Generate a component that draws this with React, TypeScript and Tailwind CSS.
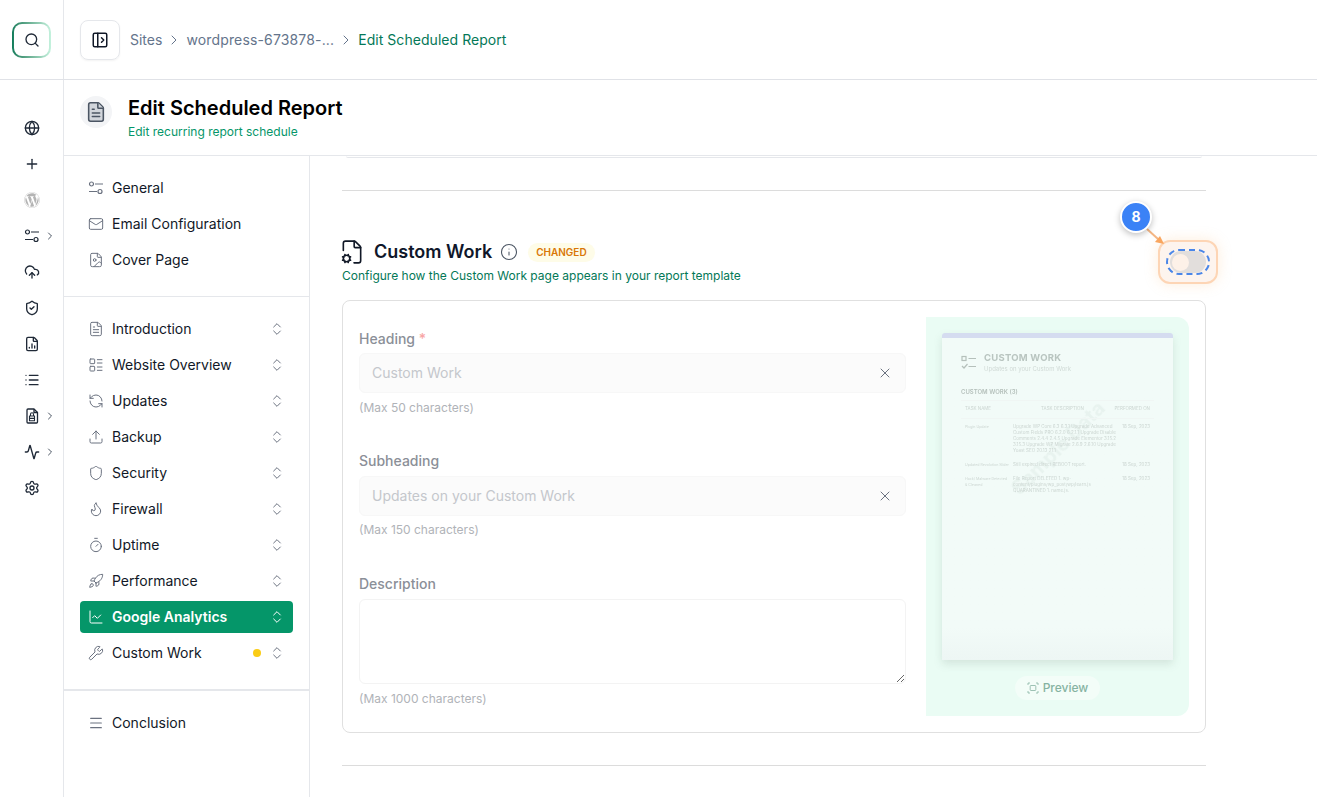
import { Activity, ChartLine, ChevronRight, ChevronsUpDown, CloudUpload, FileChartColumn, FileCog, FileImage, FileText, Flame, Globe, Info, LayoutList, Mail, Menu, PanelLeftOpen, Plus, RefreshCcw, Rocket, Search, Settings, Shield, ShieldCheck, Timer, Upload, Wrench, List, X } from 'lucide-react';
import { FaWordpress } from 'react-icons/fa';

function Sliders({ className }: { className?: string }) {
  return (
    <svg viewBox="0 0 16 16" fill="none" stroke="currentColor" strokeWidth="1.2" className={className}>
      <circle cx="3.5" cy="4" r="2" />
      <path d="M7 4h8M1 11.5h8" />
      <circle cx="12" cy="11.5" r="2" />
    </svg>
  );
}

function FileBadge({ className }: { className?: string }) {
  return (
    <svg viewBox="0 0 16 16" fill="none" stroke="currentColor" strokeWidth="1.3" strokeLinejoin="round" className={className}>
      <path d="M4 1h6l3.5 3.5V14a1 1 0 0 1-1 1H4a1 1 0 0 1-1-1V2a1 1 0 0 1 1-1z" />
      <path d="M10 1v3.5h3.5" />
      <rect x="5.5" y="8" width="5" height="4.8" strokeWidth="1.1" />
      <path d="M6.5 8V6.3a1.5 1.5 0 0 1 3 0V8M5.5 10.4h5" strokeWidth="1.1" />
    </svg>
  );
}

function TaskListIcon({ className }: { className?: string }) {
  return (
    <svg viewBox="0 0 16 16" fill="none" stroke="currentColor" strokeWidth="1.2" className={className}>
      <rect x="1" y="1.5" width="4" height="4" />
      <path d="M7.5 3.5H15M1 11l2 2 3.5-4M7.5 11.5H15" />
    </svg>
  );
}

function PreviewIcon({ className }: { className?: string }) {
  return (
    <svg viewBox="0 0 12 12" fill="none" stroke="currentColor" strokeWidth="0.8" className={className}>
      <path d="M1 3V1h2M9 1h2v2M11 9v2H9M3 11H1V9" />
      <rect x="3.2" y="3.5" width="5.6" height="5" rx="0.8" />
    </svg>
  );
}

const railIcons = [
  { icon: <Globe className="size-4" /> },
  { icon: <Plus className="size-4" /> },
  { icon: <FaWordpress className="size-4 text-[#b4b4b4]" /> },
  { icon: <Sliders className="size-4" />, more: true },
  { icon: <CloudUpload className="size-4" /> },
  { icon: <ShieldCheck className="size-4" /> },
  { icon: <FileChartColumn className="size-4" /> },
  { icon: <List className="size-4" /> },
  { icon: <FileBadge className="size-4" />, more: true },
  { icon: <Activity className="size-4" />, more: true },
  { icon: <Settings className="size-4" /> },
];

const sections = [
  { label: 'Introduction', Icon: FileText },
  { label: 'Website Overview', Icon: LayoutList },
  { label: 'Updates', Icon: RefreshCcw },
  { label: 'Backup', Icon: Upload },
  { label: 'Security', Icon: Shield },
  { label: 'Firewall', Icon: Flame },
  { label: 'Uptime', Icon: Timer },
  { label: 'Performance', Icon: Rocket },
];

const tasks = [
  {
    name: 'Plugin Update',
    text: 'Upgrade WP Core 6.3 6.3.1 Upgrade Advanced Custom Fields PRO 6.2.0 6.2.1.1 Upgrade Disable Comments 2.4.4 2.4.5 Upgrade Elementor 3.15.2 3.15.3 Upgrade WP Migrate 2.6.9 2.6.10 Upgrade Yoast SEO 20.13 21.1',
    date: '18 Sep, 2023',
  },
  { name: 'Updated Revolution Slider', text: 'Still expired direct REBOOT report.', date: '18 Sep, 2023' },
  {
    name: 'Hack/ Malware Detected & Cleaned',
    text: 'File Report DELETED 1. wp-content/plugins/wp_post/wp/learn.js QUARANTINED 1. name.js.',
    date: '18 Sep, 2023',
  },
];

function Row({ label, Icon }: { label: string; Icon: typeof Mail }) {
  return (
    <div className="flex h-9 items-center gap-2 pl-2 pr-2 text-sm text-[#111827]">
      <Icon className="size-4 shrink-0 text-[#6b7280]" strokeWidth={1.5} />
      <span className="flex-1">{label}</span>
      <ChevronsUpDown className="size-4 text-[#6b7280]" strokeWidth={1.5} />
    </div>
  );
}

function ReportPreview() {
  return (
    <div className="flex h-[399px] w-[263px] shrink-0 flex-col items-center rounded-r-xl bg-[#eafcf4] px-4 pt-4">
      <div className="relative h-[327px] w-full overflow-hidden rounded-t-[3px] border-t-[5px] border-[#d5dcf0] bg-gradient-to-b from-[#f2fbf8] from-90% to-[#edf6f4] shadow-[0_4px_8px_rgba(120,140,130,0.2)]">
        <div className="absolute left-[54px] top-[95px] w-[124px] -rotate-45 text-center text-[20px] font-bold whitespace-nowrap text-[#e8f3ef] blur-[0.5px]">Sample Data</div>
        <div className="relative px-[19px] pt-[14px] blur-[0.4px]">
          <div className="flex items-center gap-[7px]">
            <TaskListIcon className="size-4 text-[#b5c0bb]" />
            <div>
              <div className="text-[9.5px] leading-3 font-bold tracking-wide text-[#b9c5c0]">CUSTOM WORK</div>
              <div className="text-[6px] leading-[10px] text-[#d0dad6]">Updates on your Custom Work</div>
            </div>
          </div>
          <div className="mt-[13px] text-[6px] font-semibold text-[#b5c0bb]">CUSTOM WORK (3)</div>
          <div className="mt-[4px] flex border-y border-[#f0f6f4] py-[5px] pl-1 pr-1 text-[4.5px] text-[#ccd6d2]">
            <span className="w-[48px]">TASK NAME</span>
            <span className="flex-1 pl-7">TASK DESCRIPTION</span>
            <span>PERFORMED ON</span>
          </div>
          <div className="mt-[5px] flex flex-col gap-[8px] pl-1 pr-1 text-[4.5px] leading-[6px] text-[#ccd6d2]">
            {tasks.map((task) => (
              <div key={task.name} className="flex">
                <span className="w-[48px] shrink-0 pr-1 text-[3.6px]">{task.name}</span>
                <span className="w-[104px] shrink-0">{task.text}</span>
                <span className="flex-1 text-right">{task.date}</span>
              </div>
            ))}
          </div>
        </div>
      </div>
      <div className="mt-4 flex h-6 items-center gap-1 rounded-full bg-[#f3fdf8] px-3 text-xs font-medium text-[#86b3a2]">
        <PreviewIcon className="size-3" />
        Preview
      </div>
    </div>
  );
}

function ToggleCallout() {
  return (
    <>
      <div className="absolute -right-3 top-[2px] flex h-[44px] w-[60px] items-center justify-center rounded-xl border-2 border-[#fdd5b5] bg-[#fdf4ee] shadow-[0_0_14px_rgba(253,186,116,0.25)]">
        <div className="flex h-[26px] w-[44px] items-center justify-center rounded-full border-2 border-dashed border-[#4a86e8]">
          <div className="flex h-[22px] w-[36px] items-center rounded-full bg-[#e2dedc] pl-[2px]">
            <div className="size-[17px] rounded-full bg-[#fdf1e8]" />
          </div>
        </div>
      </div>
      <svg className="absolute right-[40px] top-[-10px] h-[18px] w-[20px]" viewBox="0 0 20 18" fill="none">
        <path d="M1 1l11 10" stroke="#f4b684" strokeWidth="2" />
        <path d="M18 16l-9-2 5-6z" fill="#f9a65f" />
      </svg>
      <div className="absolute right-[54px] top-[-37px] flex size-[32px] items-center justify-center rounded-full border-2 border-white bg-[#3b82f6] text-sm font-bold text-white shadow-[0_2px_6px_rgba(0,0,0,0.25)]">
        8
      </div>
    </>
  );
}

export default function App() {
  return (
    <div className="flex h-[797px] w-full flex-col overflow-hidden bg-white font-[Inter,sans-serif]">
      <header className="flex h-20 shrink-0 border-b border-[#e0e2e7]">
        <div className="flex w-16 shrink-0 items-center justify-center border-r border-[#e5e7eb]">
          <div className="rounded-[10px] bg-gradient-to-r from-[#0f7d5c] to-[#c5f2de] p-[2px]">
            <div className="flex h-[32px] w-[35px] items-center justify-center rounded-[8px] bg-white">
              <Search className="size-4 text-[#1f2937]" />
            </div>
          </div>
        </div>
        <div className="flex items-center pl-4 text-sm text-[#64748b]">
          <div className="flex size-10 items-center justify-center rounded-lg border border-[#e5e7eb] shadow-xs">
            <PanelLeftOpen className="size-[18px] text-[#111827]" />
          </div>
          <span className="ml-[10px]">Sites</span>
          <ChevronRight className="mx-1 size-4" strokeWidth={1.5} />
          <span className="tracking-[0.15px]">wordpress-673878-...</span>
          <ChevronRight className="mx-1 size-4" strokeWidth={1.5} />
          <span className="tracking-[0.05px] text-[#047857]">Edit Scheduled Report</span>
        </div>
      </header>

      <div className="flex min-h-0 flex-1">
        <nav className="w-16 shrink-0 border-r border-[#e5e7eb] pt-[30px] text-[#1f2937]">
          {railIcons.map((item, idx) => (
            <div key={idx} className="relative flex h-9 items-center justify-center">
              {item.icon}
              {item.more && <ChevronRight className="absolute left-[44px] size-3 text-[#4b5563]" />}
            </div>
          ))}
        </nav>

        <div className="flex min-w-0 flex-1 flex-col">
          <div className="flex h-[76px] shrink-0 items-start gap-4 border-b border-[#e5e7eb] pl-4 pt-4">
            <div className="flex size-8 items-center justify-center rounded-full bg-[#f3f4f6]">
              <FileText className="size-[22px] fill-[#d1d5db] text-[#4b5563]" strokeWidth={1.7} />
            </div>
            <div>
              <h1 className="text-xl leading-6 font-semibold text-black">Edit Scheduled Report</h1>
              <p className="mt-1 text-xs text-[#059669]">Edit recurring report schedule</p>
            </div>
          </div>

          <div className="flex min-h-0 flex-1">
            <aside className="w-[246px] shrink-0 border-r border-[#e5e7eb]">
              <div className="border-b border-[#e5e7eb] px-4 pb-[18px] pt-[14px] text-sm text-[#111827]">
                <div className="flex h-9 items-center gap-2 pl-2">
                  <Sliders className="size-4 text-[#6b7280]" />
                  General
                </div>
                <div className="flex h-9 items-center gap-2 pl-2">
                  <Mail className="size-4 text-[#6b7280]" strokeWidth={1.5} />
                  Email Configuration
                </div>
                <div className="flex h-9 items-center gap-2 pl-2">
                  <FileImage className="size-4 text-[#6b7280]" strokeWidth={1.5} />
                  Cover Page
                </div>
              </div>
              <div className="border-b-2 border-[#e5e7eb] pb-[18px] pl-4 pr-[16px] pt-[14px]">
                {sections.map((section) => (
                  <Row key={section.label} label={section.label} Icon={section.Icon} />
                ))}
                <div className="my-[2px] flex h-8 items-center gap-2 rounded bg-[#059669] pl-2 pr-2 text-sm font-semibold text-white">
                  <ChartLine className="size-4 shrink-0" strokeWidth={1.5} />
                  <span className="flex-1">Google Analytics</span>
                  <ChevronsUpDown className="size-4" strokeWidth={1.5} />
                </div>
                <div className="flex h-9 items-center gap-2 pl-2 pr-2 text-sm text-[#111827]">
                  <Wrench className="size-4 shrink-0 text-[#6b7280]" strokeWidth={1.5} />
                  <span className="flex-1">Custom Work</span>
                  <span className="size-2 rounded-full bg-[#facc15]" />
                  <ChevronsUpDown className="size-4 text-[#6b7280]" strokeWidth={1.5} />
                </div>
              </div>
              <div className="px-4 pt-[14px]">
                <div className="flex h-9 items-center gap-2 pl-2 text-sm text-[#111827]">
                  <Menu className="size-4 text-[#6b7280]" strokeWidth={1.8} />
                  Conclusion
                </div>
              </div>
            </aside>

            <main className="w-[928px] shrink-0 pl-8 pr-8">
              <div className="mx-1 h-[2px] rounded-b-md border-b border-[#e5e7eb]" />
              <div className="mt-8 border-t border-[#dcdcdc]" />

              <section className="relative mt-[47px]">
                <div className="flex h-7 items-center">
                  <FileCog className="-ml-[3px] size-[26px] text-[#111827]" strokeWidth={1.5} />
                  <h2 className="ml-[9px] text-lg font-semibold text-[#0f172a]">Custom Work</h2>
                  <Info className="ml-2 size-[18px] text-[#4b5563]" strokeWidth={1.4} />
                  <span className="ml-[10px] rounded-full bg-[#fefce8] px-2 py-[2px] text-[10px] font-semibold text-[#d97706]">CHANGED</span>
                </div>
                <p className="mt-[2px] text-xs leading-4 text-[#047857]">Configure how the Custom Work page appears in your report template</p>
                <ToggleCallout />
              </section>

              <div className="mt-4 flex gap-5 rounded-lg border border-[#e0e0e0] p-4">
                <div className="min-w-0 flex-1 pt-3 text-[#9ca3af]">
                  <label className="block text-sm leading-5 font-medium text-[#8b8f98]">
                    Heading <span className="text-[#f8a5a5]">*</span>
                  </label>
                  <div className="mt-1 flex h-10 items-center justify-between rounded-md border border-[#f7f7f7] bg-[#fbfbfb] px-3 text-sm text-[#c4c7cc]">
                    Custom Work
                    <X className="size-4 text-[#6b7280]" strokeWidth={1.5} />
                  </div>
                  <p className="mt-[7px] text-xs leading-4 text-[#b0b3b8]">(Max 50 characters)</p>

                  <label className="mt-[35px] block text-sm leading-5 font-medium text-[#8b8f98]">Subheading</label>
                  <div className="mt-[5px] flex h-10 items-center justify-between rounded-md border border-[#f7f7f7] bg-[#fbfbfb] px-3 text-sm text-[#c4c7cc]">
                    Updates on your Custom Work
                    <X className="size-4 text-[#6b7280]" strokeWidth={1.5} />
                  </div>
                  <p className="mt-[6px] text-xs leading-4 text-[#b0b3b8]">(Max 150 characters)</p>

                  <label className="mt-9 block text-sm leading-5 font-medium text-[#8b8f98]">Description</label>
                  <textarea readOnly className="mt-[5px] block h-[85px] w-full rounded-md border border-[#f3f3f3] bg-white" />
                  <p className="mt-[7px] text-xs leading-4 text-[#b0b3b8]">(Max 1000 characters)</p>
                </div>
                <ReportPreview />
              </div>

              <div className="mt-8 border-t border-[#dcdcdc]" />
            </main>
          </div>
        </div>
      </div>
    </div>
  );
}
